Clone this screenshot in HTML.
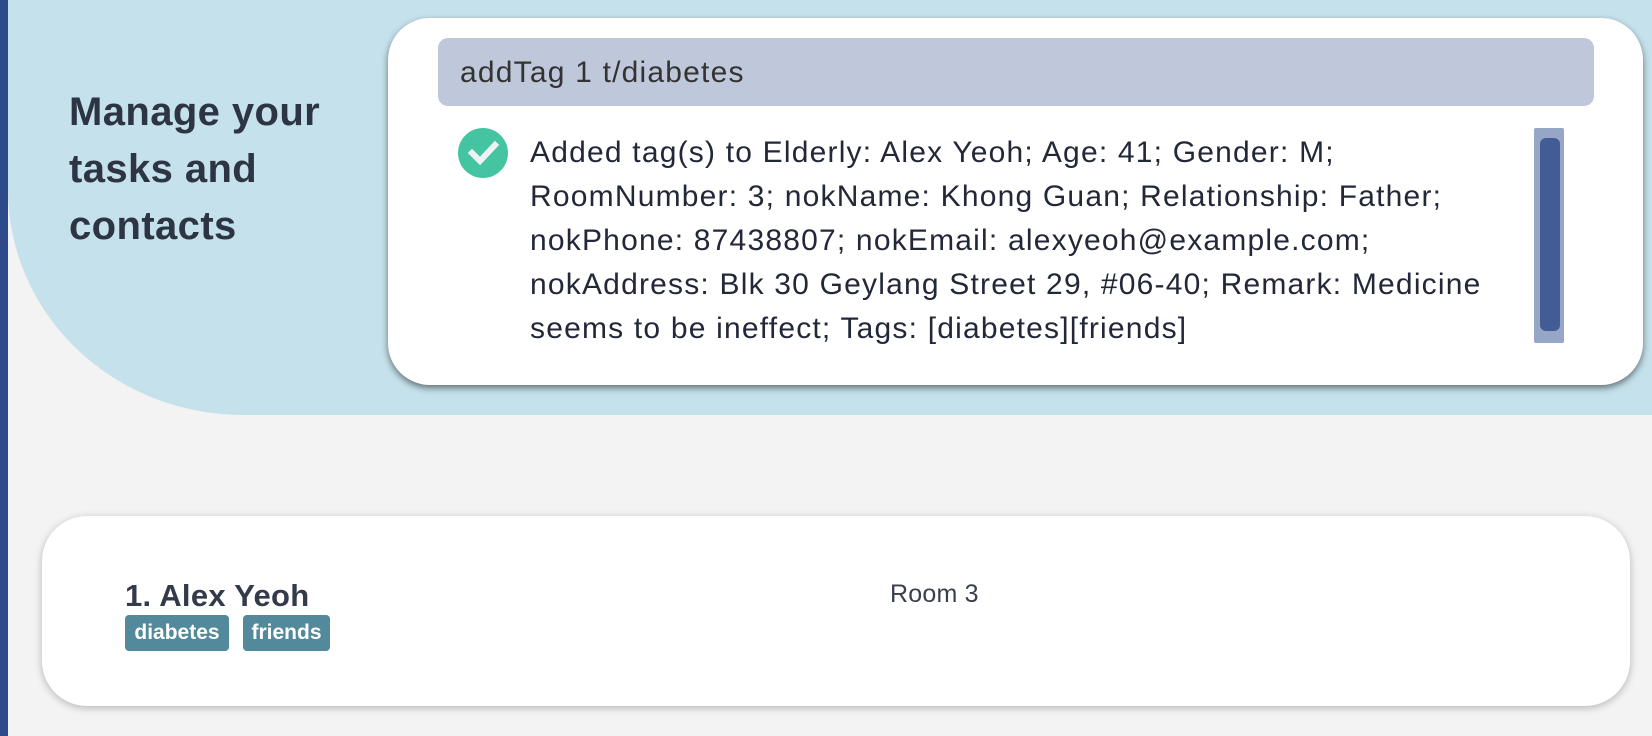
<!DOCTYPE html>
<html><head><meta charset="utf-8"><style>
*{margin:0;padding:0;box-sizing:border-box}
body{width:1652px;height:736px;background:#f3f3f3;position:relative;overflow:hidden;font-family:"Liberation Sans",sans-serif;color:#2d3443}
.bar{position:absolute;left:0;top:0;width:8px;height:736px;background:#2d4a8a}
.hero{position:absolute;left:8px;top:0;width:1644px;height:415px;background:#c5e1eb;border-bottom-left-radius:235px 225px}
.title{position:absolute;left:69px;top:84px;font-size:40px;font-weight:bold;line-height:57px;color:#2d3443;letter-spacing:0.4px}
.card{position:absolute;left:388px;top:18px;width:1255px;height:367px;background:#fff;border-radius:42px;box-shadow:0 3px 7px rgba(0,0,0,.5)}
.input{position:absolute;left:438px;top:38px;width:1156px;height:68px;background:#bfc8db;border-radius:10px;font-size:30px;letter-spacing:1.2px;color:#333;padding-left:22px;line-height:70px}
.check{position:absolute;left:458px;top:128px;width:50px;height:50px}
.out{position:absolute;left:530px;top:131px;font-size:30px;letter-spacing:1.2px;line-height:44px;white-space:nowrap;color:#222838}
.track{position:absolute;left:1534px;top:128px;width:30px;height:215px;background:#95a6c6;border-radius:2px}
.thumb{position:absolute;left:1540px;top:138px;width:20px;height:193px;background:#425d95;border-radius:6px}
.pcard{position:absolute;left:42px;top:516px;width:1588px;height:190px;background:#fff;border-radius:45px;box-shadow:0 2px 8px rgba(0,0,0,.25)}
.name{position:absolute;left:125px;top:578px;font-size:31px;font-weight:bold;color:#333a4a;letter-spacing:0.3px}
.tag{position:absolute;top:615px;height:36px;background:#528a9c;color:#fff;font-weight:bold;font-size:21px;line-height:36px;border-radius:4px;text-align:center}
.room{position:absolute;left:890px;top:580px;font-size:25px;color:#3a3f4b;letter-spacing:0.2px}
</style></head><body>
<div class="bar"></div>
<div class="hero"></div>
<div class="title">Manage your<br>tasks and<br>contacts</div>
<div class="card"></div>
<div class="input">addTag 1 t/diabetes</div>
<svg class="check" viewBox="0 0 50 50"><circle cx="25" cy="25" r="25" fill="#44c4a1"/><path d="M14 25 L22 33 L37 17" stroke="#eef2f5" stroke-width="6" fill="none" stroke-linecap="square"/></svg>
<div class="out">Added tag(s) to Elderly: Alex Yeoh; Age: 41; Gender: M;<br>RoomNumber: 3; nokName: Khong Guan; Relationship: Father;<br>nokPhone: 87438807; nokEmail: alexyeoh@example.com;<br>nokAddress: Blk 30 Geylang Street 29, #06-40; Remark: Medicine<br>seems to be ineffect; Tags: [diabetes][friends]</div>
<div class="track"></div><div class="thumb"></div>
<div class="pcard"></div>
<div class="name">1. Alex Yeoh</div>
<div class="tag" style="left:125px;width:104px">diabetes</div>
<div class="tag" style="left:243px;width:87px">friends</div>
<div class="room">Room 3</div>
</body></html>
